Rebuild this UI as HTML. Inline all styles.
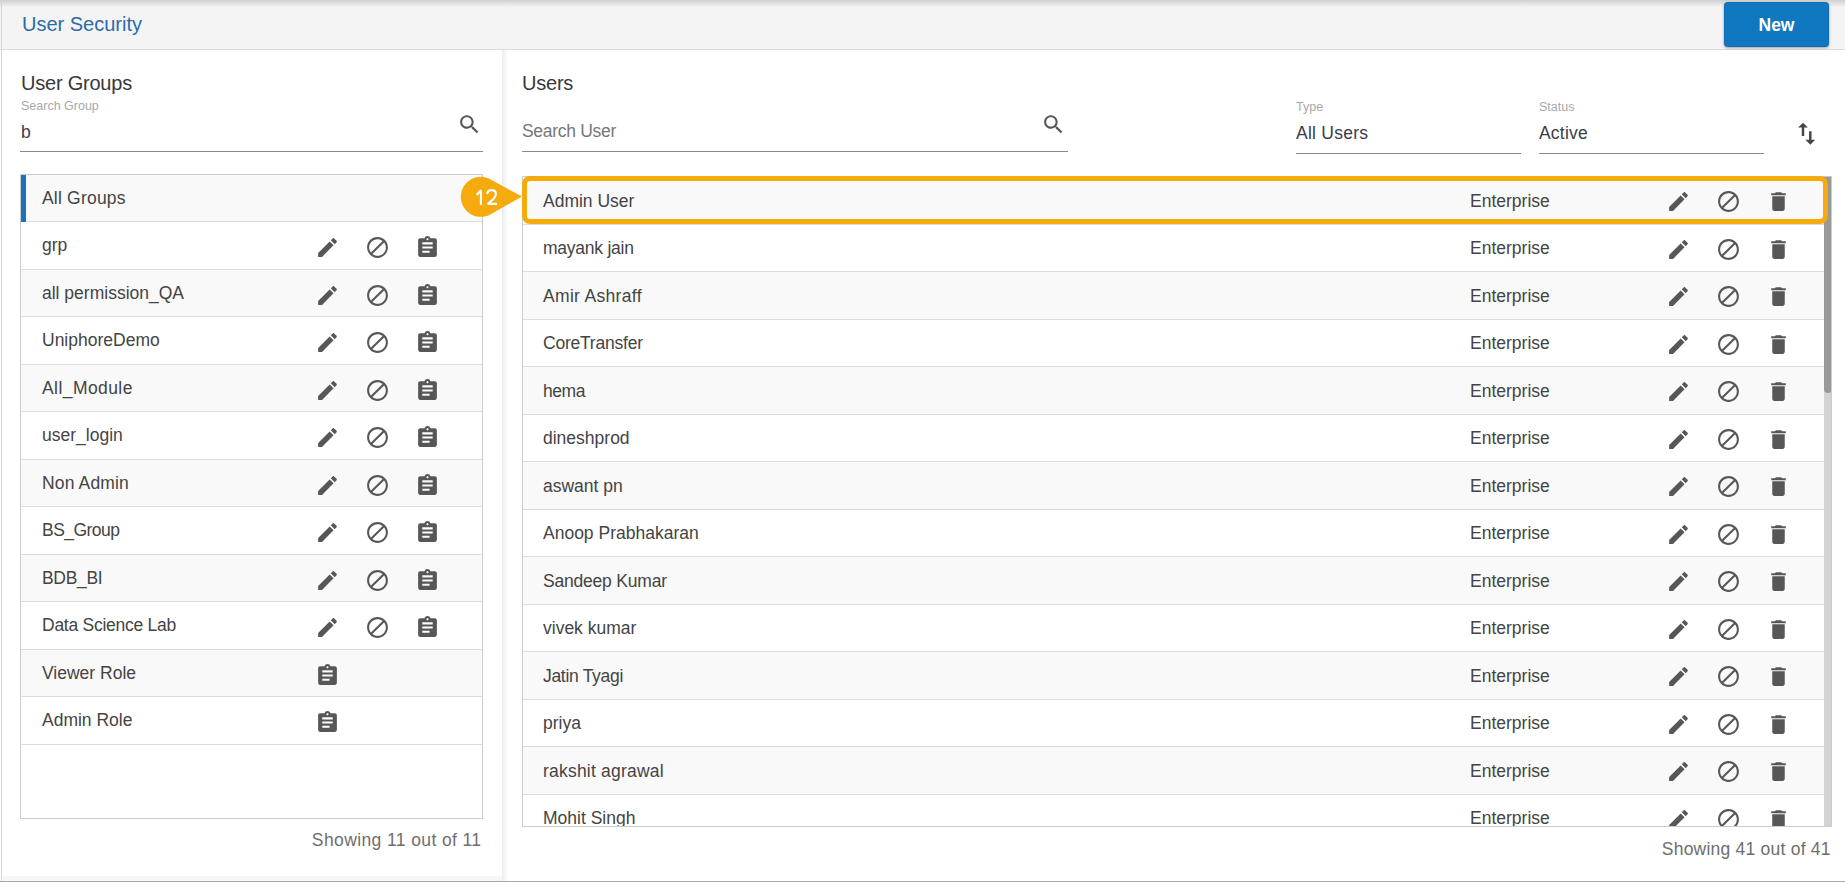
<!DOCTYPE html>
<html><head><meta charset="utf-8">
<style>
*{box-sizing:border-box;margin:0;padding:0}
html,body{width:1845px;height:882px;overflow:hidden;background:#fff;font-family:"Liberation Sans",sans-serif;color:#333}
.a{position:absolute}
.hdr{left:0;top:0;width:1845px;height:50px;background:#f4f4f4;border-bottom:1.25px solid #dcdcdc}
.topsh{left:0;top:0;width:1845px;height:7px;background:linear-gradient(#cfcfcf,rgba(244,244,244,0))}
.title{left:22px;top:12px;font-size:20px;line-height:24px;color:#2b6ca8;white-space:nowrap}
.btn{left:1724px;top:2px;width:105px;height:45px;background:#1077c1;border-radius:4px;color:#fff;font-weight:bold;font-size:17.5px;line-height:47px;text-align:center;box-shadow:0 1px 3px rgba(0,0,0,.35),inset 0 0 0 1px rgba(0,0,0,.08)}
.lline{left:1px;top:0;width:1.25px;height:882px;background:#d6d6d6}
.bline{left:0;top:880.5px;width:1845px;height:1.5px;background:#a3afae}
.lpanel{left:2px;top:50px;width:500px;height:826px;background:#fff}
.lbottom{left:2px;top:876px;width:500px;height:5px;background:#f7f7f7}
.divsh{left:502px;top:50px;width:6px;height:831px;background:linear-gradient(90deg,#ececec,#fff)}
.h2{font-size:20px;line-height:24px;letter-spacing:-0.22px;white-space:nowrap;color:#383838}
.lbl{font-size:12.5px;line-height:15px;color:#a8a8a8;white-space:nowrap}
.val{font-size:17.5px;line-height:20px;white-space:nowrap;color:#3a3e48}
.ul{height:1.5px;background:#8a8a8a}
.list{border:1.25px solid #cfcfcf;background:#fff;overflow:hidden}
.row{position:absolute;left:0;height:47.5px;line-height:47.5px;font-size:17.5px;white-space:nowrap;color:#333;border-bottom:1.25px solid #dedede}
.row.g{background:#f9f9f9}
.row .t{position:absolute;top:0}
.ic{position:absolute;width:25px;height:25px;fill:#575757}
.foot{font-size:17.5px;line-height:20px;color:#6e6e6e;white-space:nowrap;text-align:right}
.sep{height:1px;background:#dcdcdc}
.rt{font-size:17.5px;line-height:20px;white-space:nowrap;color:#444}
.clip{position:absolute;overflow:hidden}
.bord{position:absolute;border:1px solid #cccccc}
</style></head><body>
<div class="a lpanel"></div>
<div class="a lbottom"></div>
<div class="a hdr"></div>
<div class="a topsh"></div>
<div class="a lline"></div>
<div class="a title">User Security</div>
<div class="a btn">New</div>
<div class="a divsh"></div>
<div class="a bline"></div>

<!-- LEFT PANEL -->
<div class="a h2" style="left:21px;top:71.3px">User Groups</div>
<div class="a lbl" style="left:21px;top:99.3px">Search Group</div>
<div class="a val" style="left:21px;top:122px">b</div>
<svg class="a ic" style="left:457px;top:112px" viewBox="0 0 24 24"><path d="M15.5 14h-.79l-.28-.27C15.41 12.59 16 11.11 16 9.5 16 5.91 13.09 3 9.5 3S3 5.91 3 9.5 5.91 16 9.5 16c1.61 0 3.09-.59 4.23-1.57l.27.28v.79l5 4.99L20.49 19l-4.99-5zm-6 0C7.01 14 5 11.99 5 9.5S7.01 5 9.5 5 14 7.01 14 9.5 11.99 14 9.5 14z"/></svg>
<div class="a ul" style="left:20px;top:150.7px;width:463px"></div>

<div class="clip" style="left:20px;top:174px;width:463px;height:645px">
<div class="a" style="left:0;top:0px;width:463px;height:47px;background:#f9f9f9"></div>
<div class="a rt" style="left:22px;top:13.90px;letter-spacing:0.200px">All Groups</div>
<div class="a" style="left:0;top:47px;width:463px;height:48px;background:#fff"></div>
<div class="a sep" style="left:0;top:47px;width:463px"></div>
<div class="a rt" style="left:22px;top:61.40px;letter-spacing:0.000px">grp</div>
<svg class="a ic" style="left:295px;top:61.00px" viewBox="0 0 24 24"><path d="M3 17.25V21h3.75L17.81 9.94l-3.75-3.75L3 17.25zM20.71 7.04c.39-.39.39-1.02 0-1.41l-2.34-2.34c-.39-.39-1.02-.39-1.41 0l-1.83 1.83 3.75 3.75 1.83-1.83z"/></svg>
<svg class="a ic" style="left:345px;top:61.00px" viewBox="0 0 24 24"><path d="M12 2C6.48 2 2 6.48 2 12s4.48 10 10 10 10-4.48 10-10S17.52 2 12 2zM4 12c0-4.42 3.58-8 8-8 1.85 0 3.55.63 4.9 1.69L5.69 16.9C4.63 15.55 4 13.85 4 12zm8 8c-1.85 0-3.55-.63-4.9-1.69L18.31 7.1C19.37 8.45 20 10.15 20 12c0 4.42-3.58 8-8 8z"/></svg>
<svg class="a ic" style="left:395px;top:61.00px" viewBox="0 0 24 24"><path d="M19 3h-4.18C14.4 1.84 13.3 1 12 1c-1.3 0-2.4.84-2.82 2H5c-1.1 0-2 .9-2 2v14c0 1.1.9 2 2 2h14c1.1 0 2-.9 2-2V5c0-1.1-.9-2-2-2zm-7 0c.55 0 1 .45 1 1s-.45 1-1 1-1-.45-1-1 .45-1 1-1zm2 14H7v-2h7v2zm3-4H7v-2h10v2zm0-4H7V7h10v2z"/></svg>
<div class="a" style="left:0;top:95px;width:463px;height:47px;background:#f9f9f9"></div>
<div class="a sep" style="left:0;top:95px;width:463px"></div>
<div class="a rt" style="left:22px;top:108.90px;letter-spacing:0.000px">all permission_QA</div>
<svg class="a ic" style="left:295px;top:108.50px" viewBox="0 0 24 24"><path d="M3 17.25V21h3.75L17.81 9.94l-3.75-3.75L3 17.25zM20.71 7.04c.39-.39.39-1.02 0-1.41l-2.34-2.34c-.39-.39-1.02-.39-1.41 0l-1.83 1.83 3.75 3.75 1.83-1.83z"/></svg>
<svg class="a ic" style="left:345px;top:108.50px" viewBox="0 0 24 24"><path d="M12 2C6.48 2 2 6.48 2 12s4.48 10 10 10 10-4.48 10-10S17.52 2 12 2zM4 12c0-4.42 3.58-8 8-8 1.85 0 3.55.63 4.9 1.69L5.69 16.9C4.63 15.55 4 13.85 4 12zm8 8c-1.85 0-3.55-.63-4.9-1.69L18.31 7.1C19.37 8.45 20 10.15 20 12c0 4.42-3.58 8-8 8z"/></svg>
<svg class="a ic" style="left:395px;top:108.50px" viewBox="0 0 24 24"><path d="M19 3h-4.18C14.4 1.84 13.3 1 12 1c-1.3 0-2.4.84-2.82 2H5c-1.1 0-2 .9-2 2v14c0 1.1.9 2 2 2h14c1.1 0 2-.9 2-2V5c0-1.1-.9-2-2-2zm-7 0c.55 0 1 .45 1 1s-.45 1-1 1-1-.45-1-1 .45-1 1-1zm2 14H7v-2h7v2zm3-4H7v-2h10v2zm0-4H7V7h10v2z"/></svg>
<div class="a" style="left:0;top:142px;width:463px;height:48px;background:#fff"></div>
<div class="a sep" style="left:0;top:142px;width:463px"></div>
<div class="a rt" style="left:22px;top:156.40px;letter-spacing:0.000px">UniphoreDemo</div>
<svg class="a ic" style="left:295px;top:156.00px" viewBox="0 0 24 24"><path d="M3 17.25V21h3.75L17.81 9.94l-3.75-3.75L3 17.25zM20.71 7.04c.39-.39.39-1.02 0-1.41l-2.34-2.34c-.39-.39-1.02-.39-1.41 0l-1.83 1.83 3.75 3.75 1.83-1.83z"/></svg>
<svg class="a ic" style="left:345px;top:156.00px" viewBox="0 0 24 24"><path d="M12 2C6.48 2 2 6.48 2 12s4.48 10 10 10 10-4.48 10-10S17.52 2 12 2zM4 12c0-4.42 3.58-8 8-8 1.85 0 3.55.63 4.9 1.69L5.69 16.9C4.63 15.55 4 13.85 4 12zm8 8c-1.85 0-3.55-.63-4.9-1.69L18.31 7.1C19.37 8.45 20 10.15 20 12c0 4.42-3.58 8-8 8z"/></svg>
<svg class="a ic" style="left:395px;top:156.00px" viewBox="0 0 24 24"><path d="M19 3h-4.18C14.4 1.84 13.3 1 12 1c-1.3 0-2.4.84-2.82 2H5c-1.1 0-2 .9-2 2v14c0 1.1.9 2 2 2h14c1.1 0 2-.9 2-2V5c0-1.1-.9-2-2-2zm-7 0c.55 0 1 .45 1 1s-.45 1-1 1-1-.45-1-1 .45-1 1-1zm2 14H7v-2h7v2zm3-4H7v-2h10v2zm0-4H7V7h10v2z"/></svg>
<div class="a" style="left:0;top:190px;width:463px;height:47px;background:#f9f9f9"></div>
<div class="a sep" style="left:0;top:190px;width:463px"></div>
<div class="a rt" style="left:22px;top:203.90px;letter-spacing:0.425px">All_Module</div>
<svg class="a ic" style="left:295px;top:203.50px" viewBox="0 0 24 24"><path d="M3 17.25V21h3.75L17.81 9.94l-3.75-3.75L3 17.25zM20.71 7.04c.39-.39.39-1.02 0-1.41l-2.34-2.34c-.39-.39-1.02-.39-1.41 0l-1.83 1.83 3.75 3.75 1.83-1.83z"/></svg>
<svg class="a ic" style="left:345px;top:203.50px" viewBox="0 0 24 24"><path d="M12 2C6.48 2 2 6.48 2 12s4.48 10 10 10 10-4.48 10-10S17.52 2 12 2zM4 12c0-4.42 3.58-8 8-8 1.85 0 3.55.63 4.9 1.69L5.69 16.9C4.63 15.55 4 13.85 4 12zm8 8c-1.85 0-3.55-.63-4.9-1.69L18.31 7.1C19.37 8.45 20 10.15 20 12c0 4.42-3.58 8-8 8z"/></svg>
<svg class="a ic" style="left:395px;top:203.50px" viewBox="0 0 24 24"><path d="M19 3h-4.18C14.4 1.84 13.3 1 12 1c-1.3 0-2.4.84-2.82 2H5c-1.1 0-2 .9-2 2v14c0 1.1.9 2 2 2h14c1.1 0 2-.9 2-2V5c0-1.1-.9-2-2-2zm-7 0c.55 0 1 .45 1 1s-.45 1-1 1-1-.45-1-1 .45-1 1-1zm2 14H7v-2h7v2zm3-4H7v-2h10v2zm0-4H7V7h10v2z"/></svg>
<div class="a" style="left:0;top:237px;width:463px;height:48px;background:#fff"></div>
<div class="a sep" style="left:0;top:237px;width:463px"></div>
<div class="a rt" style="left:22px;top:251.40px;letter-spacing:0.000px">user_login</div>
<svg class="a ic" style="left:295px;top:251.00px" viewBox="0 0 24 24"><path d="M3 17.25V21h3.75L17.81 9.94l-3.75-3.75L3 17.25zM20.71 7.04c.39-.39.39-1.02 0-1.41l-2.34-2.34c-.39-.39-1.02-.39-1.41 0l-1.83 1.83 3.75 3.75 1.83-1.83z"/></svg>
<svg class="a ic" style="left:345px;top:251.00px" viewBox="0 0 24 24"><path d="M12 2C6.48 2 2 6.48 2 12s4.48 10 10 10 10-4.48 10-10S17.52 2 12 2zM4 12c0-4.42 3.58-8 8-8 1.85 0 3.55.63 4.9 1.69L5.69 16.9C4.63 15.55 4 13.85 4 12zm8 8c-1.85 0-3.55-.63-4.9-1.69L18.31 7.1C19.37 8.45 20 10.15 20 12c0 4.42-3.58 8-8 8z"/></svg>
<svg class="a ic" style="left:395px;top:251.00px" viewBox="0 0 24 24"><path d="M19 3h-4.18C14.4 1.84 13.3 1 12 1c-1.3 0-2.4.84-2.82 2H5c-1.1 0-2 .9-2 2v14c0 1.1.9 2 2 2h14c1.1 0 2-.9 2-2V5c0-1.1-.9-2-2-2zm-7 0c.55 0 1 .45 1 1s-.45 1-1 1-1-.45-1-1 .45-1 1-1zm2 14H7v-2h7v2zm3-4H7v-2h10v2zm0-4H7V7h10v2z"/></svg>
<div class="a" style="left:0;top:285px;width:463px;height:47px;background:#f9f9f9"></div>
<div class="a sep" style="left:0;top:285px;width:463px"></div>
<div class="a rt" style="left:22px;top:298.90px;letter-spacing:0.154px">Non Admin</div>
<svg class="a ic" style="left:295px;top:298.50px" viewBox="0 0 24 24"><path d="M3 17.25V21h3.75L17.81 9.94l-3.75-3.75L3 17.25zM20.71 7.04c.39-.39.39-1.02 0-1.41l-2.34-2.34c-.39-.39-1.02-.39-1.41 0l-1.83 1.83 3.75 3.75 1.83-1.83z"/></svg>
<svg class="a ic" style="left:345px;top:298.50px" viewBox="0 0 24 24"><path d="M12 2C6.48 2 2 6.48 2 12s4.48 10 10 10 10-4.48 10-10S17.52 2 12 2zM4 12c0-4.42 3.58-8 8-8 1.85 0 3.55.63 4.9 1.69L5.69 16.9C4.63 15.55 4 13.85 4 12zm8 8c-1.85 0-3.55-.63-4.9-1.69L18.31 7.1C19.37 8.45 20 10.15 20 12c0 4.42-3.58 8-8 8z"/></svg>
<svg class="a ic" style="left:395px;top:298.50px" viewBox="0 0 24 24"><path d="M19 3h-4.18C14.4 1.84 13.3 1 12 1c-1.3 0-2.4.84-2.82 2H5c-1.1 0-2 .9-2 2v14c0 1.1.9 2 2 2h14c1.1 0 2-.9 2-2V5c0-1.1-.9-2-2-2zm-7 0c.55 0 1 .45 1 1s-.45 1-1 1-1-.45-1-1 .45-1 1-1zm2 14H7v-2h7v2zm3-4H7v-2h10v2zm0-4H7V7h10v2z"/></svg>
<div class="a" style="left:0;top:332px;width:463px;height:48px;background:#fff"></div>
<div class="a sep" style="left:0;top:332px;width:463px"></div>
<div class="a rt" style="left:22px;top:346.40px;letter-spacing:-0.531px">BS_Group</div>
<svg class="a ic" style="left:295px;top:346.00px" viewBox="0 0 24 24"><path d="M3 17.25V21h3.75L17.81 9.94l-3.75-3.75L3 17.25zM20.71 7.04c.39-.39.39-1.02 0-1.41l-2.34-2.34c-.39-.39-1.02-.39-1.41 0l-1.83 1.83 3.75 3.75 1.83-1.83z"/></svg>
<svg class="a ic" style="left:345px;top:346.00px" viewBox="0 0 24 24"><path d="M12 2C6.48 2 2 6.48 2 12s4.48 10 10 10 10-4.48 10-10S17.52 2 12 2zM4 12c0-4.42 3.58-8 8-8 1.85 0 3.55.63 4.9 1.69L5.69 16.9C4.63 15.55 4 13.85 4 12zm8 8c-1.85 0-3.55-.63-4.9-1.69L18.31 7.1C19.37 8.45 20 10.15 20 12c0 4.42-3.58 8-8 8z"/></svg>
<svg class="a ic" style="left:395px;top:346.00px" viewBox="0 0 24 24"><path d="M19 3h-4.18C14.4 1.84 13.3 1 12 1c-1.3 0-2.4.84-2.82 2H5c-1.1 0-2 .9-2 2v14c0 1.1.9 2 2 2h14c1.1 0 2-.9 2-2V5c0-1.1-.9-2-2-2zm-7 0c.55 0 1 .45 1 1s-.45 1-1 1-1-.45-1-1 .45-1 1-1zm2 14H7v-2h7v2zm3-4H7v-2h10v2zm0-4H7V7h10v2z"/></svg>
<div class="a" style="left:0;top:380px;width:463px;height:47px;background:#f9f9f9"></div>
<div class="a sep" style="left:0;top:380px;width:463px"></div>
<div class="a rt" style="left:22px;top:393.90px;letter-spacing:-0.330px">BDB_BI</div>
<svg class="a ic" style="left:295px;top:393.50px" viewBox="0 0 24 24"><path d="M3 17.25V21h3.75L17.81 9.94l-3.75-3.75L3 17.25zM20.71 7.04c.39-.39.39-1.02 0-1.41l-2.34-2.34c-.39-.39-1.02-.39-1.41 0l-1.83 1.83 3.75 3.75 1.83-1.83z"/></svg>
<svg class="a ic" style="left:345px;top:393.50px" viewBox="0 0 24 24"><path d="M12 2C6.48 2 2 6.48 2 12s4.48 10 10 10 10-4.48 10-10S17.52 2 12 2zM4 12c0-4.42 3.58-8 8-8 1.85 0 3.55.63 4.9 1.69L5.69 16.9C4.63 15.55 4 13.85 4 12zm8 8c-1.85 0-3.55-.63-4.9-1.69L18.31 7.1C19.37 8.45 20 10.15 20 12c0 4.42-3.58 8-8 8z"/></svg>
<svg class="a ic" style="left:395px;top:393.50px" viewBox="0 0 24 24"><path d="M19 3h-4.18C14.4 1.84 13.3 1 12 1c-1.3 0-2.4.84-2.82 2H5c-1.1 0-2 .9-2 2v14c0 1.1.9 2 2 2h14c1.1 0 2-.9 2-2V5c0-1.1-.9-2-2-2zm-7 0c.55 0 1 .45 1 1s-.45 1-1 1-1-.45-1-1 .45-1 1-1zm2 14H7v-2h7v2zm3-4H7v-2h10v2zm0-4H7V7h10v2z"/></svg>
<div class="a" style="left:0;top:427px;width:463px;height:48px;background:#fff"></div>
<div class="a sep" style="left:0;top:427px;width:463px"></div>
<div class="a rt" style="left:22px;top:441.40px;letter-spacing:-0.256px">Data Science Lab</div>
<svg class="a ic" style="left:295px;top:441.00px" viewBox="0 0 24 24"><path d="M3 17.25V21h3.75L17.81 9.94l-3.75-3.75L3 17.25zM20.71 7.04c.39-.39.39-1.02 0-1.41l-2.34-2.34c-.39-.39-1.02-.39-1.41 0l-1.83 1.83 3.75 3.75 1.83-1.83z"/></svg>
<svg class="a ic" style="left:345px;top:441.00px" viewBox="0 0 24 24"><path d="M12 2C6.48 2 2 6.48 2 12s4.48 10 10 10 10-4.48 10-10S17.52 2 12 2zM4 12c0-4.42 3.58-8 8-8 1.85 0 3.55.63 4.9 1.69L5.69 16.9C4.63 15.55 4 13.85 4 12zm8 8c-1.85 0-3.55-.63-4.9-1.69L18.31 7.1C19.37 8.45 20 10.15 20 12c0 4.42-3.58 8-8 8z"/></svg>
<svg class="a ic" style="left:395px;top:441.00px" viewBox="0 0 24 24"><path d="M19 3h-4.18C14.4 1.84 13.3 1 12 1c-1.3 0-2.4.84-2.82 2H5c-1.1 0-2 .9-2 2v14c0 1.1.9 2 2 2h14c1.1 0 2-.9 2-2V5c0-1.1-.9-2-2-2zm-7 0c.55 0 1 .45 1 1s-.45 1-1 1-1-.45-1-1 .45-1 1-1zm2 14H7v-2h7v2zm3-4H7v-2h10v2zm0-4H7V7h10v2z"/></svg>
<div class="a" style="left:0;top:475px;width:463px;height:47px;background:#f9f9f9"></div>
<div class="a sep" style="left:0;top:475px;width:463px"></div>
<div class="a rt" style="left:22px;top:488.90px;letter-spacing:0.000px">Viewer Role</div>
<svg class="a ic" style="left:295px;top:488.50px" viewBox="0 0 24 24"><path d="M19 3h-4.18C14.4 1.84 13.3 1 12 1c-1.3 0-2.4.84-2.82 2H5c-1.1 0-2 .9-2 2v14c0 1.1.9 2 2 2h14c1.1 0 2-.9 2-2V5c0-1.1-.9-2-2-2zm-7 0c.55 0 1 .45 1 1s-.45 1-1 1-1-.45-1-1 .45-1 1-1zm2 14H7v-2h7v2zm3-4H7v-2h10v2zm0-4H7V7h10v2z"/></svg>
<div class="a" style="left:0;top:522px;width:463px;height:48px;background:#fff"></div>
<div class="a sep" style="left:0;top:522px;width:463px"></div>
<div class="a rt" style="left:22px;top:536.40px;letter-spacing:0.000px">Admin Role</div>
<svg class="a ic" style="left:295px;top:536.00px" viewBox="0 0 24 24"><path d="M19 3h-4.18C14.4 1.84 13.3 1 12 1c-1.3 0-2.4.84-2.82 2H5c-1.1 0-2 .9-2 2v14c0 1.1.9 2 2 2h14c1.1 0 2-.9 2-2V5c0-1.1-.9-2-2-2zm-7 0c.55 0 1 .45 1 1s-.45 1-1 1-1-.45-1-1 .45-1 1-1zm2 14H7v-2h7v2zm3-4H7v-2h10v2zm0-4H7V7h10v2z"/></svg>
<div class="a sep" style="left:0;top:570px;width:463px"></div>
<div class="a" style="left:1px;top:0.7px;width:5px;height:47.3px;background:#1a73ba"></div>
</div>
<div class="bord" style="left:20px;top:174px;width:463px;height:645px"></div>
<div class="a foot" style="left:200px;top:830px;width:281.5px;letter-spacing:0.39px">Showing 11 out of 11</div>

<!-- RIGHT PANEL -->
<div class="a h2" style="left:522px;top:71.3px">Users</div>
<div class="a val" style="left:522px;top:121px;color:#777;letter-spacing:-0.3px">Search User</div>
<svg class="a ic" style="left:1041px;top:112px" viewBox="0 0 24 24"><path d="M15.5 14h-.79l-.28-.27C15.41 12.59 16 11.11 16 9.5 16 5.91 13.09 3 9.5 3S3 5.91 3 9.5 5.91 16 9.5 16c1.61 0 3.09-.59 4.23-1.57l.27.28v.79l5 4.99L20.49 19l-4.99-5zm-6 0C7.01 14 5 11.99 5 9.5S7.01 5 9.5 5 14 7.01 14 9.5 11.99 14 9.5 14z"/></svg>
<div class="a ul" style="left:522px;top:150.7px;width:546px"></div>

<div class="a lbl" style="left:1296px;top:99.5px">Type</div>
<div class="a val" style="left:1296px;top:123px;letter-spacing:0.25px">All Users</div>
<div class="a ul" style="left:1296px;top:152.8px;width:225px"></div>
<div class="a lbl" style="left:1539px;top:99.5px">Status</div>
<div class="a val" style="left:1539px;top:123px;letter-spacing:0.2px">Active</div>
<div class="a ul" style="left:1539px;top:152.8px;width:225px"></div>
<svg class="a" style="left:1791.7px;top:119.3px;width:29.3px;height:29.3px;fill:#454545" viewBox="0 0 24 24"><path d="M16 17.01V10h-2v7.01h-3L15 21l4-3.99h-3zM9 3L5 6.99h3V14h2V6.99h3L9 3z"/></svg>

<div class="clip" style="left:522px;top:176px;width:1310px;height:651px">
<div class="a" style="left:0;top:0px;width:1310px;height:48px;background:#f9f9f9"></div>
<div class="a rt" style="left:21.00px;top:14.75px;letter-spacing:0.000px">Admin User</div>
<div class="a rt" style="left:948.00px;top:14.75px">Enterprise</div>
<svg class="a ic" style="left:1144px;top:13.20px" viewBox="0 0 24 24"><path d="M3 17.25V21h3.75L17.81 9.94l-3.75-3.75L3 17.25zM20.71 7.04c.39-.39.39-1.02 0-1.41l-2.34-2.34c-.39-.39-1.02-.39-1.41 0l-1.83 1.83 3.75 3.75 1.83-1.83z"/></svg>
<svg class="a ic" style="left:1194px;top:13.20px" viewBox="0 0 24 24"><path d="M12 2C6.48 2 2 6.48 2 12s4.48 10 10 10 10-4.48 10-10S17.52 2 12 2zM4 12c0-4.42 3.58-8 8-8 1.85 0 3.55.63 4.9 1.69L5.69 16.9C4.63 15.55 4 13.85 4 12zm8 8c-1.85 0-3.55-.63-4.9-1.69L18.31 7.1C19.37 8.45 20 10.15 20 12c0 4.42-3.58 8-8 8z"/></svg>
<svg class="a ic" style="left:1244px;top:13.20px" viewBox="0 0 24 24"><path d="M6 19c0 1.1.9 2 2 2h8c1.1 0 2-.9 2-2V7H6v12zM19 4h-3.5l-1-1h-5l-1 1H5v2h14V4z"/></svg>
<div class="a" style="left:0;top:48px;width:1310px;height:47px;background:#fff"></div>
<div class="a sep" style="left:0;top:48px;width:1310px"></div>
<div class="a rt" style="left:21.00px;top:62.25px;letter-spacing:-0.238px">mayank jain</div>
<div class="a rt" style="left:948.00px;top:62.25px">Enterprise</div>
<svg class="a ic" style="left:1144px;top:60.70px" viewBox="0 0 24 24"><path d="M3 17.25V21h3.75L17.81 9.94l-3.75-3.75L3 17.25zM20.71 7.04c.39-.39.39-1.02 0-1.41l-2.34-2.34c-.39-.39-1.02-.39-1.41 0l-1.83 1.83 3.75 3.75 1.83-1.83z"/></svg>
<svg class="a ic" style="left:1194px;top:60.70px" viewBox="0 0 24 24"><path d="M12 2C6.48 2 2 6.48 2 12s4.48 10 10 10 10-4.48 10-10S17.52 2 12 2zM4 12c0-4.42 3.58-8 8-8 1.85 0 3.55.63 4.9 1.69L5.69 16.9C4.63 15.55 4 13.85 4 12zm8 8c-1.85 0-3.55-.63-4.9-1.69L18.31 7.1C19.37 8.45 20 10.15 20 12c0 4.42-3.58 8-8 8z"/></svg>
<svg class="a ic" style="left:1244px;top:60.70px" viewBox="0 0 24 24"><path d="M6 19c0 1.1.9 2 2 2h8c1.1 0 2-.9 2-2V7H6v12zM19 4h-3.5l-1-1h-5l-1 1H5v2h14V4z"/></svg>
<div class="a" style="left:0;top:95px;width:1310px;height:48px;background:#f9f9f9"></div>
<div class="a sep" style="left:0;top:95px;width:1310px"></div>
<div class="a rt" style="left:21.00px;top:109.75px;letter-spacing:0.323px">Amir Ashraff</div>
<div class="a rt" style="left:948.00px;top:109.75px">Enterprise</div>
<svg class="a ic" style="left:1144px;top:108.20px" viewBox="0 0 24 24"><path d="M3 17.25V21h3.75L17.81 9.94l-3.75-3.75L3 17.25zM20.71 7.04c.39-.39.39-1.02 0-1.41l-2.34-2.34c-.39-.39-1.02-.39-1.41 0l-1.83 1.83 3.75 3.75 1.83-1.83z"/></svg>
<svg class="a ic" style="left:1194px;top:108.20px" viewBox="0 0 24 24"><path d="M12 2C6.48 2 2 6.48 2 12s4.48 10 10 10 10-4.48 10-10S17.52 2 12 2zM4 12c0-4.42 3.58-8 8-8 1.85 0 3.55.63 4.9 1.69L5.69 16.9C4.63 15.55 4 13.85 4 12zm8 8c-1.85 0-3.55-.63-4.9-1.69L18.31 7.1C19.37 8.45 20 10.15 20 12c0 4.42-3.58 8-8 8z"/></svg>
<svg class="a ic" style="left:1244px;top:108.20px" viewBox="0 0 24 24"><path d="M6 19c0 1.1.9 2 2 2h8c1.1 0 2-.9 2-2V7H6v12zM19 4h-3.5l-1-1h-5l-1 1H5v2h14V4z"/></svg>
<div class="a" style="left:0;top:143px;width:1310px;height:47px;background:#fff"></div>
<div class="a sep" style="left:0;top:143px;width:1310px"></div>
<div class="a rt" style="left:21.00px;top:157.25px;letter-spacing:-0.222px">CoreTransfer</div>
<div class="a rt" style="left:948.00px;top:157.25px">Enterprise</div>
<svg class="a ic" style="left:1144px;top:155.70px" viewBox="0 0 24 24"><path d="M3 17.25V21h3.75L17.81 9.94l-3.75-3.75L3 17.25zM20.71 7.04c.39-.39.39-1.02 0-1.41l-2.34-2.34c-.39-.39-1.02-.39-1.41 0l-1.83 1.83 3.75 3.75 1.83-1.83z"/></svg>
<svg class="a ic" style="left:1194px;top:155.70px" viewBox="0 0 24 24"><path d="M12 2C6.48 2 2 6.48 2 12s4.48 10 10 10 10-4.48 10-10S17.52 2 12 2zM4 12c0-4.42 3.58-8 8-8 1.85 0 3.55.63 4.9 1.69L5.69 16.9C4.63 15.55 4 13.85 4 12zm8 8c-1.85 0-3.55-.63-4.9-1.69L18.31 7.1C19.37 8.45 20 10.15 20 12c0 4.42-3.58 8-8 8z"/></svg>
<svg class="a ic" style="left:1244px;top:155.70px" viewBox="0 0 24 24"><path d="M6 19c0 1.1.9 2 2 2h8c1.1 0 2-.9 2-2V7H6v12zM19 4h-3.5l-1-1h-5l-1 1H5v2h14V4z"/></svg>
<div class="a" style="left:0;top:190px;width:1310px;height:48px;background:#f9f9f9"></div>
<div class="a sep" style="left:0;top:190px;width:1310px"></div>
<div class="a rt" style="left:21.00px;top:204.75px;letter-spacing:-0.425px">hema</div>
<div class="a rt" style="left:948.00px;top:204.75px">Enterprise</div>
<svg class="a ic" style="left:1144px;top:203.20px" viewBox="0 0 24 24"><path d="M3 17.25V21h3.75L17.81 9.94l-3.75-3.75L3 17.25zM20.71 7.04c.39-.39.39-1.02 0-1.41l-2.34-2.34c-.39-.39-1.02-.39-1.41 0l-1.83 1.83 3.75 3.75 1.83-1.83z"/></svg>
<svg class="a ic" style="left:1194px;top:203.20px" viewBox="0 0 24 24"><path d="M12 2C6.48 2 2 6.48 2 12s4.48 10 10 10 10-4.48 10-10S17.52 2 12 2zM4 12c0-4.42 3.58-8 8-8 1.85 0 3.55.63 4.9 1.69L5.69 16.9C4.63 15.55 4 13.85 4 12zm8 8c-1.85 0-3.55-.63-4.9-1.69L18.31 7.1C19.37 8.45 20 10.15 20 12c0 4.42-3.58 8-8 8z"/></svg>
<svg class="a ic" style="left:1244px;top:203.20px" viewBox="0 0 24 24"><path d="M6 19c0 1.1.9 2 2 2h8c1.1 0 2-.9 2-2V7H6v12zM19 4h-3.5l-1-1h-5l-1 1H5v2h14V4z"/></svg>
<div class="a" style="left:0;top:238px;width:1310px;height:47px;background:#fff"></div>
<div class="a sep" style="left:0;top:238px;width:1310px"></div>
<div class="a rt" style="left:21.00px;top:252.25px;letter-spacing:0.000px">dineshprod</div>
<div class="a rt" style="left:948.00px;top:252.25px">Enterprise</div>
<svg class="a ic" style="left:1144px;top:250.70px" viewBox="0 0 24 24"><path d="M3 17.25V21h3.75L17.81 9.94l-3.75-3.75L3 17.25zM20.71 7.04c.39-.39.39-1.02 0-1.41l-2.34-2.34c-.39-.39-1.02-.39-1.41 0l-1.83 1.83 3.75 3.75 1.83-1.83z"/></svg>
<svg class="a ic" style="left:1194px;top:250.70px" viewBox="0 0 24 24"><path d="M12 2C6.48 2 2 6.48 2 12s4.48 10 10 10 10-4.48 10-10S17.52 2 12 2zM4 12c0-4.42 3.58-8 8-8 1.85 0 3.55.63 4.9 1.69L5.69 16.9C4.63 15.55 4 13.85 4 12zm8 8c-1.85 0-3.55-.63-4.9-1.69L18.31 7.1C19.37 8.45 20 10.15 20 12c0 4.42-3.58 8-8 8z"/></svg>
<svg class="a ic" style="left:1244px;top:250.70px" viewBox="0 0 24 24"><path d="M6 19c0 1.1.9 2 2 2h8c1.1 0 2-.9 2-2V7H6v12zM19 4h-3.5l-1-1h-5l-1 1H5v2h14V4z"/></svg>
<div class="a" style="left:0;top:285px;width:1310px;height:48px;background:#f9f9f9"></div>
<div class="a sep" style="left:0;top:285px;width:1310px"></div>
<div class="a rt" style="left:21.00px;top:299.75px;letter-spacing:0.000px">aswant pn</div>
<div class="a rt" style="left:948.00px;top:299.75px">Enterprise</div>
<svg class="a ic" style="left:1144px;top:298.20px" viewBox="0 0 24 24"><path d="M3 17.25V21h3.75L17.81 9.94l-3.75-3.75L3 17.25zM20.71 7.04c.39-.39.39-1.02 0-1.41l-2.34-2.34c-.39-.39-1.02-.39-1.41 0l-1.83 1.83 3.75 3.75 1.83-1.83z"/></svg>
<svg class="a ic" style="left:1194px;top:298.20px" viewBox="0 0 24 24"><path d="M12 2C6.48 2 2 6.48 2 12s4.48 10 10 10 10-4.48 10-10S17.52 2 12 2zM4 12c0-4.42 3.58-8 8-8 1.85 0 3.55.63 4.9 1.69L5.69 16.9C4.63 15.55 4 13.85 4 12zm8 8c-1.85 0-3.55-.63-4.9-1.69L18.31 7.1C19.37 8.45 20 10.15 20 12c0 4.42-3.58 8-8 8z"/></svg>
<svg class="a ic" style="left:1244px;top:298.20px" viewBox="0 0 24 24"><path d="M6 19c0 1.1.9 2 2 2h8c1.1 0 2-.9 2-2V7H6v12zM19 4h-3.5l-1-1h-5l-1 1H5v2h14V4z"/></svg>
<div class="a" style="left:0;top:333px;width:1310px;height:47px;background:#fff"></div>
<div class="a sep" style="left:0;top:333px;width:1310px"></div>
<div class="a rt" style="left:21.00px;top:347.25px;letter-spacing:0.000px">Anoop Prabhakaran</div>
<div class="a rt" style="left:948.00px;top:347.25px">Enterprise</div>
<svg class="a ic" style="left:1144px;top:345.70px" viewBox="0 0 24 24"><path d="M3 17.25V21h3.75L17.81 9.94l-3.75-3.75L3 17.25zM20.71 7.04c.39-.39.39-1.02 0-1.41l-2.34-2.34c-.39-.39-1.02-.39-1.41 0l-1.83 1.83 3.75 3.75 1.83-1.83z"/></svg>
<svg class="a ic" style="left:1194px;top:345.70px" viewBox="0 0 24 24"><path d="M12 2C6.48 2 2 6.48 2 12s4.48 10 10 10 10-4.48 10-10S17.52 2 12 2zM4 12c0-4.42 3.58-8 8-8 1.85 0 3.55.63 4.9 1.69L5.69 16.9C4.63 15.55 4 13.85 4 12zm8 8c-1.85 0-3.55-.63-4.9-1.69L18.31 7.1C19.37 8.45 20 10.15 20 12c0 4.42-3.58 8-8 8z"/></svg>
<svg class="a ic" style="left:1244px;top:345.70px" viewBox="0 0 24 24"><path d="M6 19c0 1.1.9 2 2 2h8c1.1 0 2-.9 2-2V7H6v12zM19 4h-3.5l-1-1h-5l-1 1H5v2h14V4z"/></svg>
<div class="a" style="left:0;top:380px;width:1310px;height:48px;background:#f9f9f9"></div>
<div class="a sep" style="left:0;top:380px;width:1310px"></div>
<div class="a rt" style="left:21.00px;top:394.75px;letter-spacing:-0.206px">Sandeep Kumar</div>
<div class="a rt" style="left:948.00px;top:394.75px">Enterprise</div>
<svg class="a ic" style="left:1144px;top:393.20px" viewBox="0 0 24 24"><path d="M3 17.25V21h3.75L17.81 9.94l-3.75-3.75L3 17.25zM20.71 7.04c.39-.39.39-1.02 0-1.41l-2.34-2.34c-.39-.39-1.02-.39-1.41 0l-1.83 1.83 3.75 3.75 1.83-1.83z"/></svg>
<svg class="a ic" style="left:1194px;top:393.20px" viewBox="0 0 24 24"><path d="M12 2C6.48 2 2 6.48 2 12s4.48 10 10 10 10-4.48 10-10S17.52 2 12 2zM4 12c0-4.42 3.58-8 8-8 1.85 0 3.55.63 4.9 1.69L5.69 16.9C4.63 15.55 4 13.85 4 12zm8 8c-1.85 0-3.55-.63-4.9-1.69L18.31 7.1C19.37 8.45 20 10.15 20 12c0 4.42-3.58 8-8 8z"/></svg>
<svg class="a ic" style="left:1244px;top:393.20px" viewBox="0 0 24 24"><path d="M6 19c0 1.1.9 2 2 2h8c1.1 0 2-.9 2-2V7H6v12zM19 4h-3.5l-1-1h-5l-1 1H5v2h14V4z"/></svg>
<div class="a" style="left:0;top:428px;width:1310px;height:47px;background:#fff"></div>
<div class="a sep" style="left:0;top:428px;width:1310px"></div>
<div class="a rt" style="left:21.00px;top:442.25px;letter-spacing:0.000px">vivek kumar</div>
<div class="a rt" style="left:948.00px;top:442.25px">Enterprise</div>
<svg class="a ic" style="left:1144px;top:440.70px" viewBox="0 0 24 24"><path d="M3 17.25V21h3.75L17.81 9.94l-3.75-3.75L3 17.25zM20.71 7.04c.39-.39.39-1.02 0-1.41l-2.34-2.34c-.39-.39-1.02-.39-1.41 0l-1.83 1.83 3.75 3.75 1.83-1.83z"/></svg>
<svg class="a ic" style="left:1194px;top:440.70px" viewBox="0 0 24 24"><path d="M12 2C6.48 2 2 6.48 2 12s4.48 10 10 10 10-4.48 10-10S17.52 2 12 2zM4 12c0-4.42 3.58-8 8-8 1.85 0 3.55.63 4.9 1.69L5.69 16.9C4.63 15.55 4 13.85 4 12zm8 8c-1.85 0-3.55-.63-4.9-1.69L18.31 7.1C19.37 8.45 20 10.15 20 12c0 4.42-3.58 8-8 8z"/></svg>
<svg class="a ic" style="left:1244px;top:440.70px" viewBox="0 0 24 24"><path d="M6 19c0 1.1.9 2 2 2h8c1.1 0 2-.9 2-2V7H6v12zM19 4h-3.5l-1-1h-5l-1 1H5v2h14V4z"/></svg>
<div class="a" style="left:0;top:475px;width:1310px;height:48px;background:#f9f9f9"></div>
<div class="a sep" style="left:0;top:475px;width:1310px"></div>
<div class="a rt" style="left:21.00px;top:489.75px;letter-spacing:-0.305px">Jatin Tyagi</div>
<div class="a rt" style="left:948.00px;top:489.75px">Enterprise</div>
<svg class="a ic" style="left:1144px;top:488.20px" viewBox="0 0 24 24"><path d="M3 17.25V21h3.75L17.81 9.94l-3.75-3.75L3 17.25zM20.71 7.04c.39-.39.39-1.02 0-1.41l-2.34-2.34c-.39-.39-1.02-.39-1.41 0l-1.83 1.83 3.75 3.75 1.83-1.83z"/></svg>
<svg class="a ic" style="left:1194px;top:488.20px" viewBox="0 0 24 24"><path d="M12 2C6.48 2 2 6.48 2 12s4.48 10 10 10 10-4.48 10-10S17.52 2 12 2zM4 12c0-4.42 3.58-8 8-8 1.85 0 3.55.63 4.9 1.69L5.69 16.9C4.63 15.55 4 13.85 4 12zm8 8c-1.85 0-3.55-.63-4.9-1.69L18.31 7.1C19.37 8.45 20 10.15 20 12c0 4.42-3.58 8-8 8z"/></svg>
<svg class="a ic" style="left:1244px;top:488.20px" viewBox="0 0 24 24"><path d="M6 19c0 1.1.9 2 2 2h8c1.1 0 2-.9 2-2V7H6v12zM19 4h-3.5l-1-1h-5l-1 1H5v2h14V4z"/></svg>
<div class="a" style="left:0;top:523px;width:1310px;height:47px;background:#fff"></div>
<div class="a sep" style="left:0;top:523px;width:1310px"></div>
<div class="a rt" style="left:21.00px;top:537.25px;letter-spacing:0.000px">priya</div>
<div class="a rt" style="left:948.00px;top:537.25px">Enterprise</div>
<svg class="a ic" style="left:1144px;top:535.70px" viewBox="0 0 24 24"><path d="M3 17.25V21h3.75L17.81 9.94l-3.75-3.75L3 17.25zM20.71 7.04c.39-.39.39-1.02 0-1.41l-2.34-2.34c-.39-.39-1.02-.39-1.41 0l-1.83 1.83 3.75 3.75 1.83-1.83z"/></svg>
<svg class="a ic" style="left:1194px;top:535.70px" viewBox="0 0 24 24"><path d="M12 2C6.48 2 2 6.48 2 12s4.48 10 10 10 10-4.48 10-10S17.52 2 12 2zM4 12c0-4.42 3.58-8 8-8 1.85 0 3.55.63 4.9 1.69L5.69 16.9C4.63 15.55 4 13.85 4 12zm8 8c-1.85 0-3.55-.63-4.9-1.69L18.31 7.1C19.37 8.45 20 10.15 20 12c0 4.42-3.58 8-8 8z"/></svg>
<svg class="a ic" style="left:1244px;top:535.70px" viewBox="0 0 24 24"><path d="M6 19c0 1.1.9 2 2 2h8c1.1 0 2-.9 2-2V7H6v12zM19 4h-3.5l-1-1h-5l-1 1H5v2h14V4z"/></svg>
<div class="a" style="left:0;top:570px;width:1310px;height:48px;background:#f9f9f9"></div>
<div class="a sep" style="left:0;top:570px;width:1310px"></div>
<div class="a rt" style="left:21.00px;top:584.75px;letter-spacing:0.208px">rakshit agrawal</div>
<div class="a rt" style="left:948.00px;top:584.75px">Enterprise</div>
<svg class="a ic" style="left:1144px;top:583.20px" viewBox="0 0 24 24"><path d="M3 17.25V21h3.75L17.81 9.94l-3.75-3.75L3 17.25zM20.71 7.04c.39-.39.39-1.02 0-1.41l-2.34-2.34c-.39-.39-1.02-.39-1.41 0l-1.83 1.83 3.75 3.75 1.83-1.83z"/></svg>
<svg class="a ic" style="left:1194px;top:583.20px" viewBox="0 0 24 24"><path d="M12 2C6.48 2 2 6.48 2 12s4.48 10 10 10 10-4.48 10-10S17.52 2 12 2zM4 12c0-4.42 3.58-8 8-8 1.85 0 3.55.63 4.9 1.69L5.69 16.9C4.63 15.55 4 13.85 4 12zm8 8c-1.85 0-3.55-.63-4.9-1.69L18.31 7.1C19.37 8.45 20 10.15 20 12c0 4.42-3.58 8-8 8z"/></svg>
<svg class="a ic" style="left:1244px;top:583.20px" viewBox="0 0 24 24"><path d="M6 19c0 1.1.9 2 2 2h8c1.1 0 2-.9 2-2V7H6v12zM19 4h-3.5l-1-1h-5l-1 1H5v2h14V4z"/></svg>
<div class="a" style="left:0;top:618px;width:1310px;height:47px;background:#fff"></div>
<div class="a sep" style="left:0;top:618px;width:1310px"></div>
<div class="a rt" style="left:21.00px;top:632.25px;letter-spacing:0.000px">Mohit Singh</div>
<div class="a rt" style="left:948.00px;top:632.25px">Enterprise</div>
<svg class="a ic" style="left:1144px;top:630.70px" viewBox="0 0 24 24"><path d="M3 17.25V21h3.75L17.81 9.94l-3.75-3.75L3 17.25zM20.71 7.04c.39-.39.39-1.02 0-1.41l-2.34-2.34c-.39-.39-1.02-.39-1.41 0l-1.83 1.83 3.75 3.75 1.83-1.83z"/></svg>
<svg class="a ic" style="left:1194px;top:630.70px" viewBox="0 0 24 24"><path d="M12 2C6.48 2 2 6.48 2 12s4.48 10 10 10 10-4.48 10-10S17.52 2 12 2zM4 12c0-4.42 3.58-8 8-8 1.85 0 3.55.63 4.9 1.69L5.69 16.9C4.63 15.55 4 13.85 4 12zm8 8c-1.85 0-3.55-.63-4.9-1.69L18.31 7.1C19.37 8.45 20 10.15 20 12c0 4.42-3.58 8-8 8z"/></svg>
<svg class="a ic" style="left:1244px;top:630.70px" viewBox="0 0 24 24"><path d="M6 19c0 1.1.9 2 2 2h8c1.1 0 2-.9 2-2V7H6v12zM19 4h-3.5l-1-1h-5l-1 1H5v2h14V4z"/></svg>
<div class="a" style="left:1302.20px;top:0;width:7.5px;height:651px;background:#d3d3d3"></div>
<div class="a" style="left:1302.20px;top:0;width:7.5px;height:216.7px;background:#999;border-radius:0 0 4px 4px"></div>
</div>
<div class="bord" style="left:522px;top:176px;width:1310px;height:651px"></div>
<div class="a" style="left:521.9px;top:176.1px;width:1306.5px;height:48.4px;border:5.9px solid #f5aa0e;border-radius:8px"></div>
<svg class="a" style="left:455px;top:170px;width:80px;height:60px" viewBox="0 0 80 60"><path fill="#f5aa0e" d="M35.75 9.5 L67 26.6 L35.75 44.2 A20 20 0 1 1 35.75 9.5 Z"/></svg>
<svg class="a" style="left:470px;top:183px;width:32px;height:28px" viewBox="470 183 32 28" fill="none" stroke="#fff" stroke-width="2.1"><path d="M476.7 195 L480.9 190.2 L480.9 205" stroke-linejoin="bevel"/><path d="M487.2 194.2 C487.4 191.6 489.2 190.1 491.6 190.1 C494.3 190.1 495.9 191.8 495.9 194.1 C495.9 196.1 494.9 197.5 493.2 199.2 L487.8 203.9 L497 203.9" stroke-linejoin="bevel"/></svg>
<div class="a foot" style="left:500px;top:839px;width:1330.8px;letter-spacing:0.23px">Showing 41 out of 41</div>

</body></html>
